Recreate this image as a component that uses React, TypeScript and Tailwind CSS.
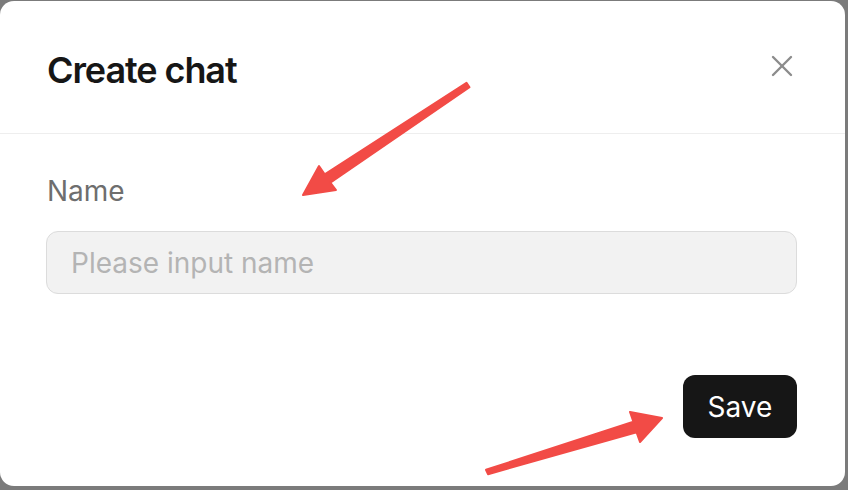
import { X } from "lucide-react";

const Arrows = () => (
  <svg
    className="pointer-events-none absolute inset-0"
    width="848"
    height="490"
    viewBox="0 0 848 490"
  >
    <polygon
      points="466.5,82.8 324.7,174.3 319,166 303,195 336,190 330.3,182.7 469.5,87.2"
      fill="#f24b46"
      stroke="#f24b46"
      strokeWidth="2"
      strokeLinejoin="round"
    />
    <polygon
      points="486,469.8 633.4,421.7 630,412 662,418 640,442 636.6,432.3 488,474.2"
      fill="#f24b46"
      stroke="#f24b46"
      strokeWidth="2"
      strokeLinejoin="round"
    />
  </svg>
);

export default function App() {
  return (
    <div
      className="relative h-[490px] w-[848px] overflow-hidden bg-[#7b7b7b] pt-[1px]"
      style={{ fontFamily: "Inter, 'Noto Sans', sans-serif" }}
    >
      <div className="flex h-[485px] w-[845px] flex-col rounded-[14px] bg-white">
        <div className="flex h-[133px] items-center justify-between border-b border-[#eeeeee] pl-[47px] pr-[48px] pt-[5px]">
          <h2 className="text-[36px] font-semibold tracking-[-0.03em] text-[#161616]">
            Create chat
          </h2>
          <button className="-mr-[3px] -mt-[7px] flex h-[36px] w-[36px] items-center justify-center text-[#8c8c8c]">
            <X size={36} strokeWidth={1.6} />
          </button>
        </div>
        <div className="flex flex-1 flex-col pl-[46px] pr-[48px] pt-[37px] pb-[48px]">
          <label className="pl-[1px] text-[28px] leading-[40px] text-[#6e6e6e]">Name</label>
          <input
            placeholder="Please input name"
            className="mt-[20px] h-[63px] w-full rounded-[12px] border border-[#dcdcdc] bg-[#f2f2f2] px-[24px] text-[28px] text-[#161616] outline-none placeholder:text-[#b4b4b4]"
          />
          <div className="mt-auto flex justify-end">
            <button className="h-[63px] w-[114px] rounded-[12px] bg-[#161616] text-[28px] text-white">
              Save
            </button>
          </div>
        </div>
      </div>
      <Arrows />
    </div>
  );
}
